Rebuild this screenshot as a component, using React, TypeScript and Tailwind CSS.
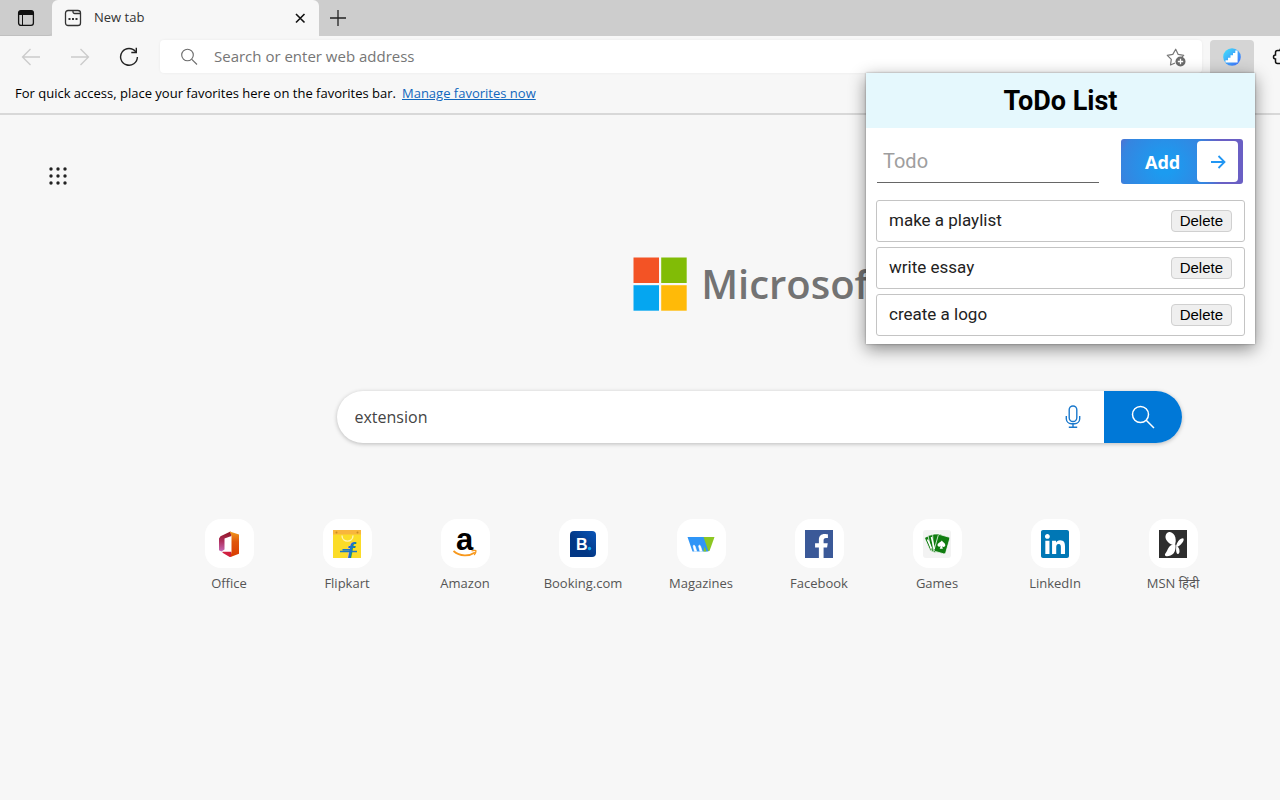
import { useState } from "react";
import type { FormEvent, ReactNode } from "react";
import { FaFacebookF, FaLinkedin } from "react-icons/fa";

const TabStrip = () => (
  <div className="flex h-9 items-stretch bg-[#cdcdcd]">
    <div className="flex w-[52px] items-center justify-center rounded-br border-b border-[#c0c0c0]">
      <button type="button" aria-label="Tab actions">
        <svg className="h-[18px] w-[18px]" viewBox="0 0 18 18" fill="none" stroke="#111">
          <rect x="1.6" y="1.6" width="14.8" height="14.8" rx="2.4" strokeWidth="1.3" />
          <path d="M1.5 3.5a2 2 0 0 1 2-2h11a2 2 0 0 1 2 2V6h-15z" fill="#111" stroke="none" />
          <path d="M5.5 6v10" strokeWidth="1" />
        </svg>
      </button>
    </div>
    <div className="flex w-[267px] items-center rounded-t-md bg-[#f7f7f7] px-3">
      <svg className="h-[18px] w-[18px]" viewBox="0 0 18 18" fill="none" stroke="#333" strokeWidth="1.3">
        <rect x="1.5" y="1.5" width="15" height="15" rx="2.6" />
        <path d="M9 1.5v1.3A1.7 1.7 0 0 0 10.7 4.5H16.5" />
        <path d="M4.5 10h2M8 10h2M11.5 10h2" strokeWidth="2" />
      </svg>
      <span className="ml-3 flex-1 text-[13px] text-[#333]">New tab</span>
      <button type="button" aria-label="Close tab">
        <svg className="h-3.5 w-3.5" viewBox="0 0 14 14" fill="none" stroke="#111" strokeWidth="1.6">
          <path d="M3 3l8.5 8.5M11.5 3L3 11.5" />
        </svg>
      </button>
    </div>
    <button type="button" aria-label="New tab" className="ml-2.5 self-center">
      <svg className="h-[18px] w-[18px]" viewBox="0 0 18 18" stroke="#222" strokeWidth="1.3">
        <path d="M9 1v16M1 9h16" />
      </svg>
    </button>
  </div>
);

const Toolbar = () => (
  <div className="flex h-[41px] items-center overflow-hidden">
    <div className="flex w-40 shrink-0 items-center gap-[29px] pl-[21px]">
      <button type="button" aria-label="Back">
        <svg className="h-5 w-5" viewBox="0 0 20 20" fill="none" stroke="#cbcbcb" strokeWidth="1.3">
          <path d="M19 10H1.5M9.5 2L1.5 10l8 8" />
        </svg>
      </button>
      <button type="button" aria-label="Forward">
        <svg className="h-5 w-5" viewBox="0 0 20 20" fill="none" stroke="#cbcbcb" strokeWidth="1.3">
          <path d="M1 10h17.5M10.5 2l8 8-8 8" />
        </svg>
      </button>
      <button type="button" aria-label="Refresh">
        <svg className="h-5 w-5" viewBox="0 0 20 20" fill="none" stroke="#222" strokeWidth="1.4">
          <path d="M16.8 4.9A8.4 8.4 0 1 0 18.4 10" />
          <path d="M17.3 0.8v4.7h-5" />
        </svg>
      </button>
    </div>
    <div className="flex h-[33px] min-w-0 flex-1 items-center rounded bg-white px-4 shadow-[0_0_3px_rgba(0,0,0,0.06)]">
      <svg className="ml-1 h-[18px] w-[18px] shrink-0" viewBox="0 0 18 18" fill="none" stroke="#6a6a6a" strokeWidth="1.1">
        <circle cx="7.5" cy="7" r="5.8" />
        <path d="M11.8 11.3L17 16.5" />
      </svg>
      <input
        type="text"
        aria-label="Address bar"
        placeholder="Search or enter web address"
        className="ml-4 min-w-0 flex-1 text-[15px] outline-none placeholder:text-[#767676]"
      />
      <button type="button" aria-label="Add to favorites">
        <svg className="h-5 w-5" viewBox="0 0 20 20" fill="none">
          <path
            d="M9 16l-4.5 2 .8-5.6L1.3 8.300l5.500-.9L9.700 2.200l2.500 5.200 5.500.9-3 3"
            stroke="#777"
            strokeWidth="1.2"
            strokeLinejoin="round"
          />
          <circle cx="14.5" cy="14.5" r="5" fill="#6b6b6b" />
          <path d="M14.5 11.8v5.4M11.8 14.5h5.4" stroke="#fff" strokeWidth="1.3" />
        </svg>
      </button>
    </div>
    <button
      type="button"
      aria-label="ToDo List extension"
      className="ml-2 flex h-[33px] w-11 items-center justify-center rounded-t bg-[#d5d5d5]"
    >
      <svg className="h-[18px] w-[18px]" viewBox="0 0 18 18">
        <defs>
          <linearGradient id="ext" x1="0" y1="0" x2="1" y2="1">
            <stop offset="0.1" stopColor="#41d9fb" />
            <stop offset="0.9" stopColor="#3f74fb" />
          </linearGradient>
        </defs>
        <circle cx="9" cy="9" r="8.8" fill="url(#ext)" />
        <path d="M2.5 14.5v-2.2H5V9.8h2.5V7.2H10V5h2.3V2.5h2.3v12z" fill="#fff" />
      </svg>
    </button>
    <button type="button" aria-label="Extensions" className="flex w-[26px] pl-[17px]">
      <svg className="h-5 w-5 shrink-0" viewBox="0 0 20 20" fill="none" stroke="#111" strokeWidth="1.5">
        <path d="M4.5 8V5.500a2 2 0 0 1 2-2H9a2.500 2.500 0 0 1 5 0h4v13H6.500a2 2 0 0 1-2-2V12a2 2 0 0 1 0-4z" />
      </svg>
    </button>
  </div>
);

const FavoritesBar = () => (
  <div className="flex h-[38px] border-b-2 border-[#d8d8d8] pt-[7px] pl-[15px] text-[13px]">
    <span className="font-medium text-black">
      For quick access, place your favorites here on the favorites bar.
    </span>
    <a href="#favorites" className="ml-1.5 text-[#1267bd] underline">
      Manage favorites now
    </a>
  </div>
);

const MicrosoftLogo = () => (
  <div className="flex items-center gap-3.5">
    <svg className="h-[54px] w-[54px]" viewBox="0 0 54 54">
      <path fill="#f35325" d="M0.5 0.5h25.500v25.500H0.5z" />
      <path fill="#81bc06" d="M28.2 0.5h25.500v25.500H28.2z" />
      <path fill="#05a6f0" d="M0.5 28.2h25.500v25.500H0.5z" />
      <path fill="#ffba08" d="M28.2 28.2h25.500v25.500H28.2z" />
    </svg>
    <span className="text-[40px] leading-[54px] font-semibold text-[#737373]">Microsoft</span>
  </div>
);

const SearchBox = () => (
  <form
    className="flex h-[52px] w-full max-w-[845px] overflow-hidden rounded-full bg-white shadow-[0_1px_4px_rgba(0,0,0,0.25)]"
    onSubmit={(e: FormEvent) => e.preventDefault()}
  >
    <input
      type="text"
      aria-label="Search the web"
      defaultValue="extension"
      className="min-w-0 flex-1 pl-[18px] text-base text-[#444] outline-none"
    />
    <button type="button" aria-label="Search by voice" className="mr-[22px]">
      <svg className="h-6 w-[18px]" viewBox="0 0 18 24" fill="none" stroke="#1a78cc" strokeWidth="1.4">
        <rect x="5.2" y="1" width="7.6" height="15.5" rx="3.8" />
        <path d="M2.3 11v3a5 5 0 0 0 5 4.700h3.400a5 5 0 0 0 5-4.700V11M9 18.700V22M4.8 22.2h8.400" />
      </svg>
    </button>
    <button type="submit" aria-label="Search" className="flex w-[78px] items-center justify-center bg-[#0078d7]">
      <svg className="h-6 w-6" viewBox="0 0 24 24" fill="none" stroke="#fff" strokeWidth="1.5">
        <circle cx="9.5" cy="9.5" r="8" />
        <path d="M15.2 15.2L23 23" />
      </svg>
    </button>
  </form>
);

const OfficeIcon = () => (
  <svg className="h-7 w-7" viewBox="0 0 28 28">
    <defs>
      <linearGradient id="office-l" x1="0" y1="0" x2="0" y2="1">
        <stop offset="0" stopColor="#8f1420" />
        <stop offset="0.5" stopColor="#b03060" />
        <stop offset="1" stopColor="#c56db8" />
      </linearGradient>
      <linearGradient id="office-r" x1="0" y1="0" x2="0" y2="1">
        <stop offset="0" stopColor="#f09a1c" />
        <stop offset="0.4" stopColor="#e0560c" />
        <stop offset="1" stopColor="#d83b01" />
      </linearGradient>
    </defs>
    <path d="M15.5 1.500L5.500 6.200 4 8.500v11.800l2.500 1.200 3-2V8.500l7-2.500z" fill="url(#office-l)" />
    <path d="M7.5 21.700h8.700v5l-1.500.3-7.200-4.200z" fill="#d02040" />
    <path d="M14.7 1.500l9.300 3v19.300L15.500 27l1-5.500V6z" fill="url(#office-r)" />
  </svg>
);

const FlipkartIcon = () => (
  <svg className="h-7 w-7 overflow-visible" viewBox="0 0 28 28">
    <path d="M0 0h28v28H0z" fill="#fbdc28" />
    <path d="M0 0h28v4.5H0z" fill="#f8b63c" />
    <path d="M9 5.5c0 7.500 11 7.500 11 0" fill="none" stroke="#fff3b0" strokeWidth="1.4" />
    <circle cx="3.5" cy="2.5" r="1" fill="#c98e20" />
    <circle cx="24.5" cy="2.5" r="1" fill="#c98e20" />
    <path d="M7 21.500h17M9.5 19.800h8" stroke="#1976c5" strokeWidth="1.5" />
    <text x="14" y="27.5" fontSize="22" fontWeight="700" fontStyle="italic" fill="#1976c5" fontFamily="Liberation Sans, sans-serif">
      f
    </text>
  </svg>
);

const AmazonIcon = () => (
  <svg className="h-7 w-7 overflow-visible" viewBox="0 0 28 28">
    <text x="13.5" y="19.5" textAnchor="middle" fontSize="31" fontWeight="700" fill="#000" fontFamily="Liberation Sans, sans-serif">
      a
    </text>
    <path d="M2.5 21c6.500 5.700 15.500 5.500 21.500 1.500" fill="none" stroke="#f7981d" strokeWidth="1.7" />
    <path d="M20.5 21c2.500-1 4.500-.5 4.500-.2 0 1.500-.6 3.200-1.800 4.200" fill="none" stroke="#f7981d" strokeWidth="1.3" />
  </svg>
);

const BookingIcon = () => (
  <svg className="h-7 w-7" viewBox="0 0 28 28">
    <defs>
      <linearGradient id="booking" x1="1" y1="0" x2="0" y2="1">
        <stop offset="0" stopColor="#0a55b8" />
        <stop offset="0.6" stopColor="#023784" />
      </linearGradient>
    </defs>
    <path d="M5 1h18a4 4 0 0 1 4 4v18a4 4 0 0 1-4 4H1V5a4 4 0 0 1 4-4z" fill="url(#booking)" />
    <text x="7" y="20" fontSize="16" fontWeight="700" fill="#fff" fontFamily="Liberation Sans, sans-serif">
      B
    </text>
    <circle cx="20.5" cy="18.5" r="1.7" fill="#12b0f3" />
  </svg>
);

const MagazinesIcon = () => (
  <svg className="h-7 w-7" viewBox="0 0 28 28">
    <path d="M16 7h11.5l-5 14h-3.500l-3.500-7z" fill="#8cc722" />
    <path d="M.5 7H16.500L21.500 21.500H5.500z" fill="#2f95f7" />
    <path
      d="M7.5 21.500l-1.300-5c-.3-1.500 1.300-1.800 1.800-.5l1.800 5.500M13 21.500l-1.300-5c-.3-1.500 1.300-1.800 1.800-.5l1.800 5.500"
      fill="#fff"
      stroke="#fff"
      strokeWidth="0.6"
    />
    <path d="M16.5 21.500l1-5 2 5z" fill="#8cc722" />
  </svg>
);

const FacebookIcon = () => (
  <span className="flex h-7 w-7 items-end justify-end overflow-hidden bg-[#3b5998] pr-1">
    <FaFacebookF className="h-6 w-[15px] shrink-0 text-white" />
  </span>
);

const GamesIcon = () => (
  <svg className="h-7 w-7" viewBox="0 0 28 28">
    <rect width="28" height="28" rx="3" fill="#f3f3f3" />
    <g fill="#107c10" stroke="#fff" strokeWidth="0.7">
      <rect x="4.5" y="5.5" width="8" height="15" rx="1.3" transform="rotate(-24 8 14)" />
      <rect x="7" y="4.5" width="8" height="17" rx="1.3" transform="rotate(-13 11 14)" />
      <rect x="10" y="4" width="9" height="18.5" rx="1.3" transform="rotate(-2 14 14)" />
      <rect x="13" y="5.5" width="12" height="17.5" rx="1.5" transform="rotate(16 19 14)" />
    </g>
    <path d="M4.5 9.500l4 9M8.500 7l2.800 12" stroke="#fff" strokeWidth="1.6" />
    <path
      d="M18.8 10.500c1 1.700 3.800 2.600 3.500 5-.2 1.400-2 1.900-3.200.8l.8 2.400h-3.200l1-2.400c-1.500.9-3.200.3-3.200-1.200 0-2.100 3-2.500 4.300-4.600z"
      fill="#fff"
    />
  </svg>
);

const LinkedInIcon = () => <FaLinkedin className="h-8 w-7 text-[#0077b5]" />;

const MsnIcon = () => (
  <svg className="h-7 w-7" viewBox="0 0 28 28">
    <path d="M0 0h28v28H0z" fill="#2d2d2d" />
    <g fill="#fff">
      <path d="M15.5 15.500C11.500 14.700 7 11.500 6.500 7.500 6.300 4 8.500 1.800 11 2c5.800.8 7 9.500 4.500 13.500z" />
      <path d="M15.5 14.500c-4-.2-6 2.900-7.200 5.700-1.200 2.800-2.800 3.500-2.300 5 1 2 6.200.6 8.700-2 1.600-2.200 2.300-5.200 1.800-8.700z" />
      <path d="M17 16c1-3.300 3.500-7.700 7-7.700 2 .7-.5 6.200-6 8.700z" />
      <path d="M17.3 16c1.700.4 3.500 2.700 3.200 5.700-.3 2.300-2.100 3-2.700 1.600-.7-1.600-.9-4-.5-7.300z" />
    </g>
  </svg>
);

const quickLinks: { label: string; icon: ReactNode }[] = [
  { label: "Office", icon: <OfficeIcon /> },
  { label: "Flipkart", icon: <FlipkartIcon /> },
  { label: "Amazon", icon: <AmazonIcon /> },
  { label: "Booking.com", icon: <BookingIcon /> },
  { label: "Magazines", icon: <MagazinesIcon /> },
  { label: "Facebook", icon: <FacebookIcon /> },
  { label: "Games", icon: <GamesIcon /> },
  { label: "LinkedIn", icon: <LinkedInIcon /> },
  { label: "MSN हिंदी", icon: <MsnIcon /> },
];

const QuickLinks = () => (
  <nav className="mt-[76px] flex justify-center pl-[122px]">
    {quickLinks.map(({ label, icon }) => (
      <a key={label} href="#link" className="flex w-[118px] flex-col items-center">
        <span className="flex h-[49px] w-[49px] items-center justify-center rounded-2xl bg-white">{icon}</span>
        <span className="mt-[5px] text-[13px] leading-5 text-[#555]">{label}</span>
      </a>
    ))}
  </nav>
);

const TodoPopup = () => {
  const [todo, setTodo] = useState("");
  const [items, setItems] = useState(["make a playlist", "write essay", "create a logo"]);

  const addTodo = (e: FormEvent) => {
    e.preventDefault();
    if (!todo.trim()) return;
    setItems([...items, todo.trim()]);
    setTodo("");
  };

  return (
    <section className="absolute top-[73px] right-[25px] w-[389px] bg-white font-[Roboto,sans-serif] shadow-[0_0_2px_rgba(0,0,0,0.35),0_5px_16px_rgba(0,0,0,0.45)]">
      <h1 className="bg-[#e5f8fd] pt-px text-center text-[27px] leading-[54px] font-bold text-black">ToDo List</h1>
      <form onSubmit={addTodo} className="flex items-start justify-between pt-[11px] pr-3 pl-[11px]">
        <input
          type="text"
          aria-label="Todo"
          placeholder="Todo"
          value={todo}
          onChange={(e) => setTodo(e.target.value)}
          className="h-11 w-[222px] border-b border-[#666] px-1.5 text-xl outline-none placeholder:text-[#9e9e9e]"
        />
        <button
          type="submit"
          className="flex h-[45px] w-[122px] items-center justify-between rounded-[3px] bg-[radial-gradient(circle_at_36%_60%,#1c9bf0_10%,#3585e0_52%,#6a5fc4_72%)] pr-[5px] pl-6 font-[Noto_Sans,sans-serif] text-lg font-bold text-white"
        >
          Add
          <span className="flex h-[41px] w-[41px] items-center justify-center rounded bg-white">
            <svg className="h-4 w-4" viewBox="0 0 16 16" fill="none" stroke="#2196f3" strokeWidth="1.8">
              <path d="M1 8h13M8.5 2l6 6-6 6" />
            </svg>
          </span>
        </button>
      </form>
      <ul className="mt-4 flex flex-col gap-[5px] px-2.5 pb-2">
        {items.map((item) => (
          <li
            key={item}
            className="flex h-[42px] items-center justify-between rounded-[3px] border border-[#c4c4c4] px-3 text-[17px] text-[#222]"
          >
            {item}
            <button
              type="button"
              aria-label={`Delete ${item}`}
              onClick={() => setItems(items.filter((i) => i !== item))}
              className="h-[22px] rounded-sm border border-[#d0d0d0] bg-[#efefef] px-2 font-[Liberation_Sans,sans-serif] text-[15px] leading-5 text-black"
            >
              Delete
            </button>
          </li>
        ))}
      </ul>
    </section>
  );
};

const App = () => (
  <div className="relative min-h-screen overflow-hidden bg-[#f7f7f7] font-[Open_Sans,Noto_Sans,sans-serif]">
    <TabStrip />
    <Toolbar />
    <FavoritesBar />
    <main className="pt-[51px]">
      <button type="button" aria-label="App launcher" className="ml-12 flex">
        <svg className="h-5 w-5" viewBox="0 0 20 20" fill="#222">
          {[3, 10, 17].map((y) => [3, 10, 17].map((x) => <circle key={`${x}-${y}`} cx={x} cy={y} r="1.7" />))}
        </svg>
      </button>
      <div className="flex flex-col items-center gap-20 pt-[71px] pl-[238px]">
        <MicrosoftLogo />
        <SearchBox />
      </div>
      <QuickLinks />
    </main>
    <TodoPopup />
  </div>
);

export default App;
